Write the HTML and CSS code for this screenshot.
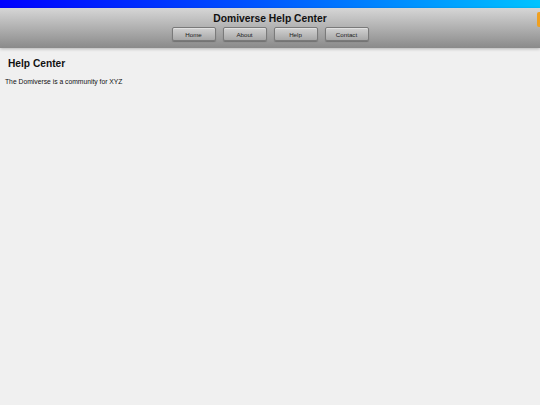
FILE: index.html
```html
<!DOCTYPE html>
<html lang="en">
<head>
<meta charset="utf-8">
<title>Domiverse Help Center</title>
<link rel="stylesheet" href="styles.css">
</head>
<body>
<div class="topbar"></div>
<header class="header">
  <h1 class="site-title">Domiverse Help Center</h1>
  <nav class="nav">
    <a class="nav-btn" href="#">Home</a>
    <a class="nav-btn" href="#">About</a>
    <a class="nav-btn" href="#">Help</a>
    <a class="nav-btn" href="#">Contact</a>
  </nav>
  <span class="corner-tab"></span>
</header>
<main class="content">
  <h2 class="page-title">Help Center</h2>
  <p class="intro">The Domiverse is a community for XYZ</p>
</main>
</body>
</html>
```
FILE: styles.css
```css
html, body {
  margin: 0;
  padding: 0;
  background: #f0f0f0;
  font-family: "Liberation Sans", Arial, sans-serif;
  color: #000;
}

.topbar {
  height: 8px;
  background: linear-gradient(to right, #0000ff 0%, #0050ff 45%, #00c4ff 100%);
}

.header {
  position: relative;
  height: 40px;
  background: linear-gradient(to bottom, #d6d6d6 0%, #b4b4b4 45%, #8a8a8a 100%);
  box-shadow: 0 1px 3px rgba(0, 0, 0, 0.25);
  display: flex;
  flex-direction: column;
  align-items: center;
}

.site-title {
  margin: 5px 0 0;
  font-size: 10.3px;
  line-height: 12px;
  font-weight: bold;
  color: #111;
}

.nav {
  display: flex;
  gap: 7px;
  margin-top: 2px;
}

.nav-btn {
  box-sizing: border-box;
  width: 44px;
  height: 14px;
  display: flex;
  align-items: center;
  justify-content: center;
  font-size: 6.2px;
  color: #222;
  text-decoration: none;
  border: 1px solid #7a7a7a;
  border-radius: 2px;
  background: linear-gradient(to bottom, #d2d2d2 0%, #a8a8a8 100%);
  box-shadow: 0 1px 1px rgba(0, 0, 0, 0.25), inset 0 1px 0 rgba(255, 255, 255, 0.35);
}

.corner-tab {
  position: absolute;
  right: -4px;
  top: 4px;
  width: 7px;
  height: 15px;
  border-radius: 2px;
  background: #f0a020;
}

.content {
  padding: 0 5px;
}

.page-title {
  margin: 10px 0 0 3px;
  font-size: 10.2px;
  line-height: 12px;
  font-weight: bold;
  color: #111;
}

.intro {
  margin: 8px 0 0;
  font-size: 6.75px;
  line-height: 8px;
  color: #111;
}
```
